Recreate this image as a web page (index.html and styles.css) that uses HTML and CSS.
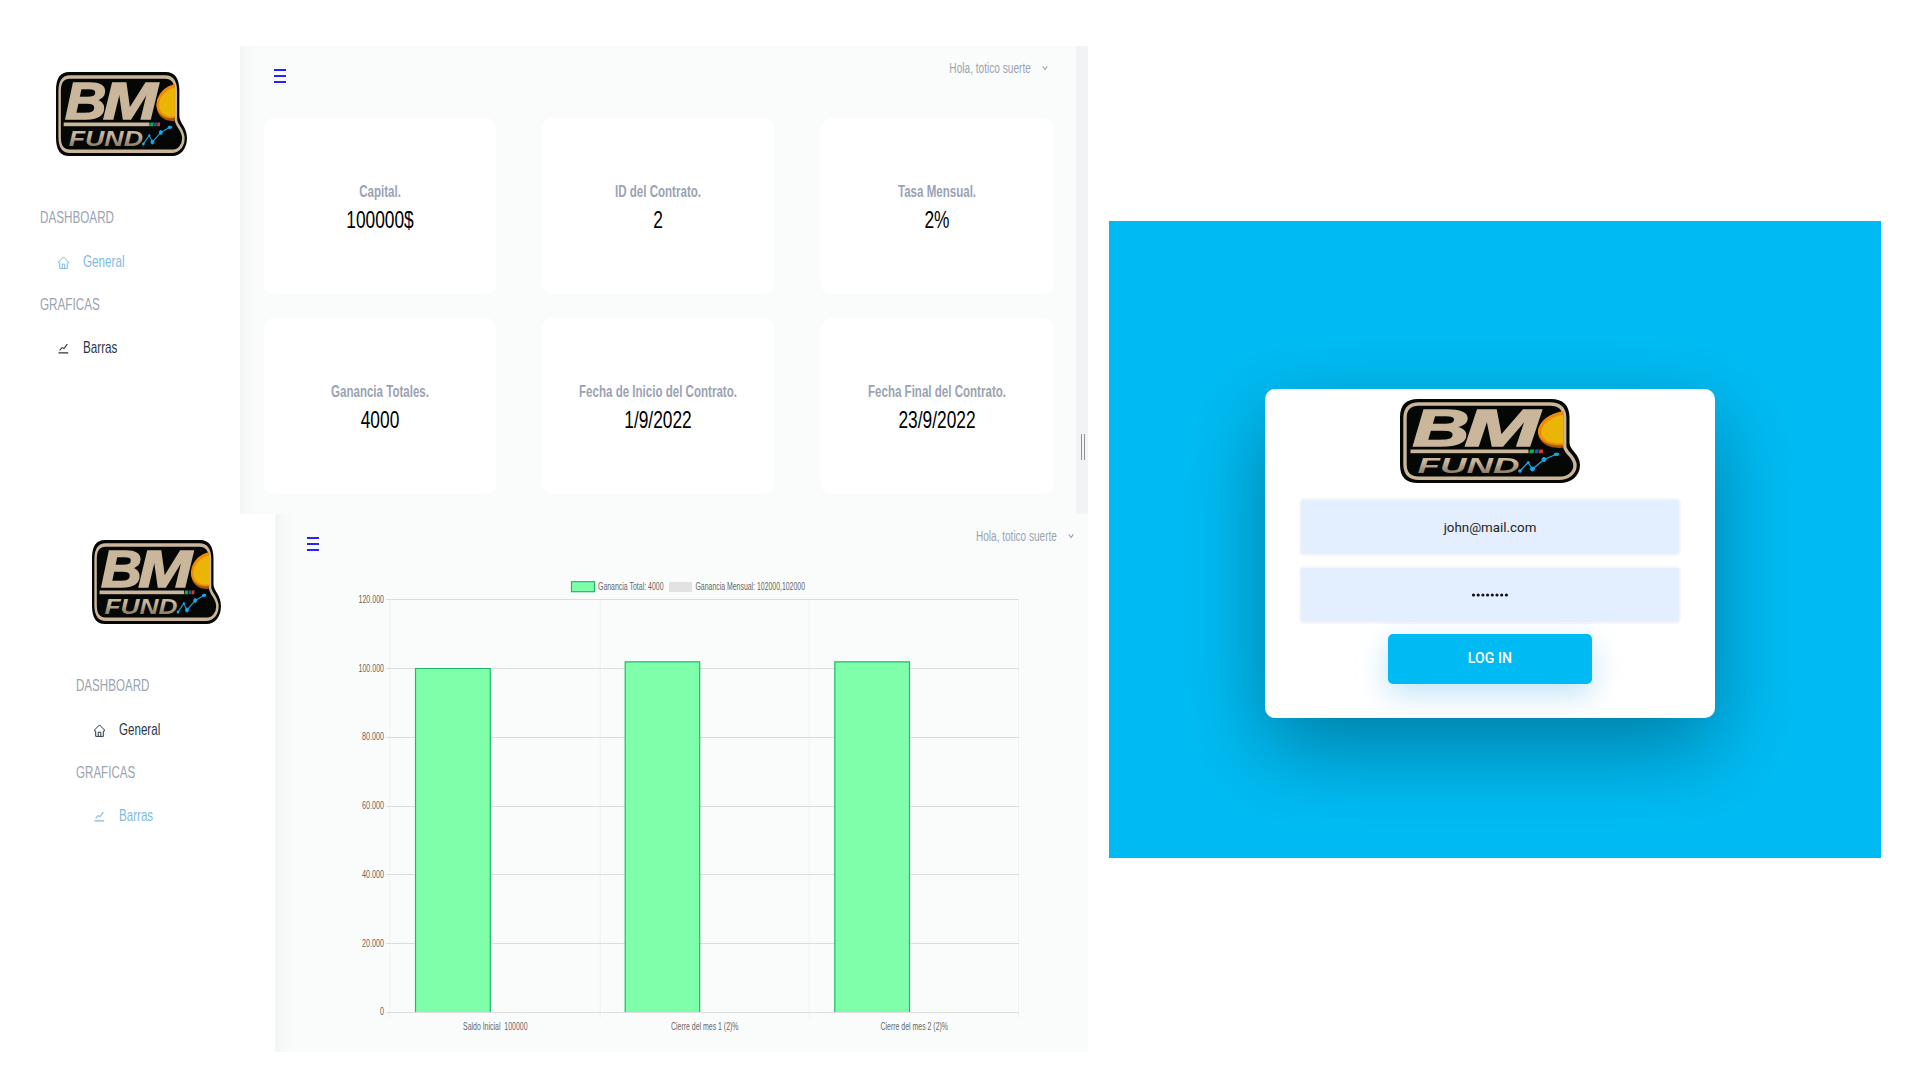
FILE: index.html
```html
<!DOCTYPE html>
<html lang="es">
<head>
<meta charset="utf-8">
<title>BM Fund</title>
<link rel="stylesheet" href="styles.css">
</head>
<body>
<svg class="defs" width="0" height="0">
  <symbol id="home" viewBox="0 0 11 13">
    <path fill="none" stroke="currentColor" stroke-width="1" d="M.5 6L5.500 .9L10.500 6L10.200 7.200H9.300V12.400H1.700V7.200H.8L.5 6M4.200 12.400V8.200H6.800V12.400"/>
  </symbol>
  <symbol id="line" viewBox="0 0 11 13">
    <path fill="none" stroke="currentColor" stroke-width="1.100" d="M.5 10.900H10.200M1.600 8.500L4 5.600L6 6.500L9.300 2.200"/>
  </symbol>
  <symbol id="burger" viewBox="0 0 12 14"><path fill="#2a22fa" d="M0 0h12v2H0zM0 6h12v2H0zM0 12h12v2H0z"/></symbol>
  <symbol id="chevron" viewBox="0 0 6 6"><path fill="none" stroke="#98a1ae" stroke-width="1.100" d="M.7 1.300L3 4.600L5.300 1.300"/></symbol>
</svg>

<main class="views">
  <section class="dashboard">
    <nav class="sidebar">
      <svg class="brand" viewBox="0 0 180 84" preserveAspectRatio="none">
        <defs>
          <linearGradient id="fade" x1="0" y1="0" x2="0" y2="1">
            <stop offset="0.350" stop-color="#c9b69b"/>
            <stop offset="1" stop-color="#6f6454"/>
          </linearGradient>
          <clipPath id="coin"><rect x="130" y="8" width="33.300" height="44"/></clipPath>
        </defs>
        <g id="logo">
          <path fill="#050705" d="M18 0H151Q169 0 169.500 18V44C169.500 51 180 55 180 66C180 77 171 84 160 84H18Q0 84 0 66V18Q0 0 18 0Z"/>
          <path fill="none" stroke="#c9b69b" stroke-width="3.400" d="M19 5H150Q164.500 5 164.700 19V47C164.700 54 175 57 175 66.500C175 74 168 79.300 159 79.300H19Q5 79.300 5 65V19Q5 5 19 5Z"/>
          <g clip-path="url(#coin)">
            <ellipse cx="163" cy="31.500" rx="25" ry="17" fill="#a85a05" transform="rotate(-12 163 31)"/>
            <ellipse cx="163" cy="29" rx="25.500" ry="16.500" fill="#f08a0a" transform="rotate(-14 163 29)"/>
            <ellipse cx="163.500" cy="30" rx="22.500" ry="14" fill="#eab507" transform="rotate(-14 163 30)"/>
          </g>
          <text class="logo-bm" x="12.500" y="47.300" textLength="57" lengthAdjust="spacingAndGlyphs">B</text>
          <text class="logo-bm" x="64.500" y="47.300" textLength="75" lengthAdjust="spacingAndGlyphs">M</text>
          <rect x="10.500" y="50.500" width="118" height="3.700" fill="#c9b69b"/>
          <path fill="#0db14b" d="M130 50.500h4.500l-1 3.700h-4.500z"/>
          <path fill="#1b5fa8" d="M135.500 50.500h3.500l-1 3.700h-3.500z"/>
          <path fill="#e8352c" d="M139.500 50.500h3.700l-.5 3.700h-4z"/>
          <text class="logo-fund" x="17.500" y="74" textLength="102" lengthAdjust="spacingAndGlyphs">FUND</text>
          <g fill="#17a9ee" stroke="#17a9ee">
            <path fill="none" stroke-width="1.300" d="M120 72L128 63.500L132.500 70L144 60.500L157 55"/>
            <circle cx="120" cy="72" r="1.300"/><circle cx="128.300" cy="63.500" r="1"/><circle cx="132.500" cy="70" r="2"/><circle cx="144" cy="60.500" r="2"/><ellipse cx="156.500" cy="55.300" rx="2.500" ry="1.200"/>
          </g>
        </g>
      </svg>
      <h2><span>DASHBOARD</span></h2>
      <a class="active"><svg><use href="#home"/></svg><span>General</span></a>
      <h2 class="second"><span>GRAFICAS</span></h2>
      <a><svg><use href="#line"/></svg><span>Barras</span></a>
    </nav>
    <div class="content">
      <header>
        <svg class="burger"><use href="#burger"/></svg>
        <div class="user"><span>Hola, totico suerte</span><svg><use href="#chevron"/></svg></div>
      </header>
      <div class="cards">
        <article><h3>Capital.</h3><p>100000$</p></article>
        <article><h3>ID del Contrato.</h3><p>2</p></article>
        <article><h3>Tasa Mensual.</h3><p>2%</p></article>
        <article><h3>Ganancia Totales.</h3><p>4000</p></article>
        <article><h3>Fecha de Inicio del Contrato.</h3><p>1/9/2022</p></article>
        <article><h3>Fecha Final del Contrato.</h3><p>23/9/2022</p></article>
      </div>
    </div>
    <div class="gutter"><i></i></div>
  </section>

  <section class="dashboard bars">
    <nav class="sidebar">
      <svg class="brand" viewBox="0 0 180 84" preserveAspectRatio="none"><use href="#logo"/></svg>
      <h2><span>DASHBOARD</span></h2>
      <a><svg><use href="#home"/></svg><span>General</span></a>
      <h2 class="second"><span>GRAFICAS</span></h2>
      <a class="active"><svg><use href="#line"/></svg><span>Barras</span></a>
    </nav>
    <div class="content">
      <header>
        <svg class="burger"><use href="#burger"/></svg>
        <div class="user"><span>Hola, totico suerte</span><svg><use href="#chevron"/></svg></div>
      </header>
      <svg class="chart" viewBox="350 574 680 466">
        <rect class="bar" x="571.500" y="581.700" width="23" height="10"/>
        <rect x="669" y="582" width="23" height="10" fill="#e2e2e2"/>
        <text x="598" y="590.300" textLength="65.500" lengthAdjust="spacingAndGlyphs">Ganancia Total: 4000</text>
        <text x="695.500" y="590.300" textLength="109.500" lengthAdjust="spacingAndGlyphs">Ganancia Mensual: 102000,102000</text>
        <path class="cols" d="M390 600V1018M600.200 600V1018M809.200 600V1018M1018.500 600V1018"/>
        <path class="rows" d="M386 599.500H1019M386 668.500H1019M386 737.500H1019M386 806.500H1019M386 874.500H1019M386 943.500H1019M386 1012.500H1019"/>
        <path class="bar" d="M415.500 1012V668.500H490.300V1012"/>
        <path class="bar" d="M625.200 1012V661.800H699.700V1012"/>
        <path class="bar" d="M834.800 1012V661.800H909.500V1012"/>
        <g>
          <text x="358.500" y="602.700" textLength="25.500" lengthAdjust="spacingAndGlyphs">120.000</text>
          <text x="358.500" y="671.500" textLength="25.500" lengthAdjust="spacingAndGlyphs">100.000</text>
          <text x="362" y="740.200" textLength="22" lengthAdjust="spacingAndGlyphs">80.000</text>
          <text x="362" y="809" textLength="22" lengthAdjust="spacingAndGlyphs">60.000</text>
          <text x="362" y="877.700" textLength="22" lengthAdjust="spacingAndGlyphs">40.000</text>
          <text x="362" y="946.500" textLength="22" lengthAdjust="spacingAndGlyphs">20.000</text>
          <text x="380" y="1015.200" textLength="4" lengthAdjust="spacingAndGlyphs">0</text>
        </g>
        <text x="463" y="1030" textLength="64.500" lengthAdjust="spacingAndGlyphs">Saldo Inicial&nbsp; 100000</text>
        <text x="671" y="1030" textLength="67.500" lengthAdjust="spacingAndGlyphs">Cierre del mes 1 (2)%</text>
        <text x="880.500" y="1030" textLength="67.500" lengthAdjust="spacingAndGlyphs">Cierre del mes 2 (2)%</text>
      </svg>
    </div>
  </section>
</main>

<section class="login">
  <form>
    <svg class="brand" viewBox="0 0 180 84" preserveAspectRatio="none"><use href="#logo"/></svg>
    <div class="field">john@mail.com</div>
    <div class="field"><svg width="38" height="4" viewBox="0 0 38 4"><path d="M2.500 2h34" stroke="#111" stroke-width="3.200" stroke-linecap="round" stroke-dasharray="0 4.700"/></svg></div>
    <button type="button">LOG IN</button>
  </form>
</section>
</body>
</html>
```
FILE: styles.css
```css
* { box-sizing: border-box; }
body {
  margin: 0;
  width: 1920px;
  height: 1080px;
  overflow: hidden;
  background: #fff;
  font-family: "Liberation Sans", Arial, sans-serif;
  font-size: 16px;
  display: flex;
  align-items: flex-start;
}
.defs { position: absolute; }
h2, h3, p { margin: 0; font-weight: 400; }

.views { width: 1088px; padding-top: 46px; }
.dashboard { --squash: .722; display: flex; height: 468px; }
.bars { --squash: .716; height: 538px; }

.logo-bm {
  font: italic bold 51px "Liberation Sans", Arial, sans-serif;
  fill: #c9b69b;
  stroke: #c9b69b;
  stroke-width: 1.5px;
}
.logo-fund {
  font: italic bold 22px "Liberation Sans", Arial, sans-serif;
  fill: url(#fade);
}

.sidebar { width: 240px; padding: 26px 0 0 40px; flex: none; }
.bars .sidebar { width: 274.500px; padding-left: 76px; }
.sidebar .brand { display: block; width: 131px; height: 84px; margin: 0 0 39px 16px; }
.bars .brand { width: 129px; }
.sidebar h2, .sidebar a { height: 44px; display: flex; align-items: center; font-size: 16.200px; }
.sidebar h2.second { height: 42px; }
.sidebar h2 { color: #9ba3b1; }
.sidebar a { padding-left: 18px; color: #2a3647; }
.sidebar a.active { color: #7dbce0; }
.sidebar a svg { width: 11px; height: 13px; margin: 2px 14px 0 0; }
.sidebar span { transform: scaleX(var(--squash)); transform-origin: left; }

.content {
  flex: 1;
  min-width: 0;
  background: linear-gradient(90deg, #f3f5f5 0, #f7f9f9 8px, #fafcfb 20px) #fafcfb;
}
header { height: 72px; padding: 23px 28.500px 0 33.500px; display: flex; justify-content: space-between; align-items: flex-start; }
.bars header { height: 60px; padding: 23px 14.500px 0 32.500px; }
.burger { width: 12px; height: 14px; }
.user { display: flex; align-items: center; gap: 11px; color: #9ba3b1; font-size: 14px; height: 16px; margin-top: -9px; }
.user span { transform: scaleX(var(--squash)); transform-origin: right; }
.user svg { width: 6px; height: 6px; }

.cards { display: grid; grid-template-columns: repeat(3, 232px); gap: 24px 46.500px; padding-left: 23.500px; }
article { height: 176px; padding-top: 62px; border-radius: 10px; background: #fff; text-align: center; }
article h3 { font-size: 16px; line-height: 24px; font-weight: 700; color: #9ba3b1; white-space: nowrap; transform: scaleX(var(--squash)); }
article p { font-size: 24px; line-height: 32px; color: #000; transform: scaleX(var(--squash)); }

.gutter { width: 12px; background: #f1f3f5; padding: 388px 3px 0 5px; }
.gutter i { display: block; height: 26px; border: solid #8f9192; border-width: 0 1px; }

.chart { display: block; width: 680px; height: 466px; margin-left: 75.500px; }
.chart text { font-size: 10px; fill: #666; }
.chart .bar { fill: #80ffab; stroke: #1fb96c; stroke-width: 1.200px; }
.chart .rows { stroke: #dcdedd; fill: none; }
.chart .cols { stroke: #f0f2f1; fill: none; }

.login {
  width: 772px;
  height: 637px;
  margin: 221px 0 0 21px;
  padding: 168px 0 0 156px;
  background: #00bbf3;
  overflow: hidden;
}
form {
  width: 450px;
  height: 329px;
  padding-top: 10px;
  border-radius: 10px;
  background: #fff;
  box-shadow: 0 30px 84px rgba(0, 0, 0, .33);
  display: flex;
  flex-direction: column;
  align-items: center;
}
form .brand { width: 180px; height: 84px; margin-bottom: 15px; flex: none; }
.field {
  width: 382px;
  height: 58px;
  margin-bottom: 10px;
  border: 2px solid #f6f6f6;
  border-radius: 5px;
  background: #e3effe;
  color: #222;
  font: 13.330px Roboto, "Liberation Sans", sans-serif;
  display: flex;
  align-items: center;
  justify-content: center;
  flex: none;
}
button {
  width: 204px;
  height: 50px;
  border: 0;
  border-radius: 5px;
  background: #00bbf3;
  color: #fff;
  padding: 0 0 2px;
  font: 500 14px Roboto, "Liberation Sans", sans-serif;
  letter-spacing: .1px;
  box-shadow: 0 10px 30px rgba(95, 186, 233, .4);
}
```
